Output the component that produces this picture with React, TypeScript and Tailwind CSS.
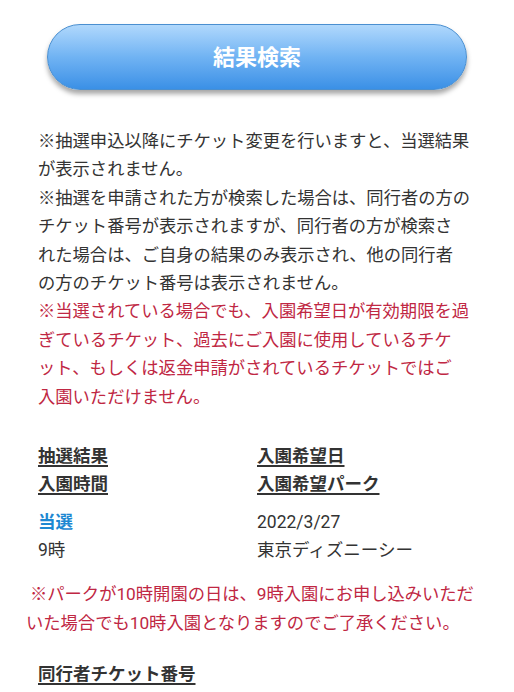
import React from "react";

const lines1 = [
  "※抽選申込以降にチケット変更を行いますと、当選結果",
  "が表示されません。",
  "※抽選を申請された方が検索した場合は、同行者の方の",
  "チケット番号が表示されますが、同行者の方が検索さ",
  "れた場合は、ご自身の結果のみ表示され、他の同行者",
  "の方のチケット番号は表示されません。",
];
const redLines = [
  "※当選されている場合でも、入園希望日が有効期限を過",
  "ぎているチケット、過去にご入園に使用しているチケ",
  "ット、もしくは返金申請がされているチケットではご",
  "入園いただけません。",
];

export default function App() {
  const font = { fontFamily: 'Roboto, "Noto Sans CJK JP", sans-serif' };
  return (
    <div className="w-[514px] min-h-[692px] bg-white overflow-hidden" style={font}>
      <div className="pt-[24px] flex justify-center">
        <button className="w-[420px] h-[66px] rounded-full border border-[#4a8fd0] bg-gradient-to-b from-[#b0d8fc] via-[#70b3f3] to-[#3a90e6] shadow-[0_4px_5px_rgba(0,0,0,0.35)] text-white text-[22px] font-bold">
          結果検索
        </button>
      </div>

      <div className="mt-[37px] pl-[38px] text-[17.3px] leading-[28.4px] text-[#333333] whitespace-nowrap">
        {lines1.map((l, i) => (
          <div key={i}>{l}</div>
        ))}
        {redLines.map((l, i) => (
          <div key={i} className="text-[#c02743]">{l}</div>
        ))}
      </div>

      <div className="mt-[31px] pl-[38px] grid grid-cols-[219px_1fr] text-[17.5px] leading-[28px] text-[#333333]">
        <div className="flex flex-col font-bold">
          <span className="underline decoration-[1.5px] underline-offset-[3px]">抽選結果</span>
          <span className="underline decoration-[1.5px] underline-offset-[3px]">入園時間</span>
        </div>
        <div className="flex flex-col font-bold">
          <span className="underline decoration-[1.5px] underline-offset-[3px]">入園希望日</span>
          <span className="underline decoration-[1.5px] underline-offset-[3px]">入園希望パーク</span>
        </div>
        <div className="flex flex-col mt-[10px]">
          <span className="font-bold text-[#1e88d2]">当選</span>
          <span>9時</span>
        </div>
        <div className="flex flex-col mt-[10px]">
          <span>2022/3/27</span>
          <span>東京ディズニーシー</span>
        </div>
      </div>

      <div className="mt-[16px] pl-[26px] text-[17.3px] leading-[29px] text-[#c02743] whitespace-nowrap">
        <div className="pl-[4px]">※パークが10時開園の日は、9時入園にお申し込みいただ</div>
        <div>いた場合でも10時入園となりますのでご了承ください。</div>
      </div>

      <div className="mt-[22px] pl-[38px] text-[17.5px] leading-[28px] font-bold text-[#333333]">
        <span className="underline decoration-[1.5px] underline-offset-[3px]">同行者チケット番号</span>
      </div>
    </div>
  );
}
